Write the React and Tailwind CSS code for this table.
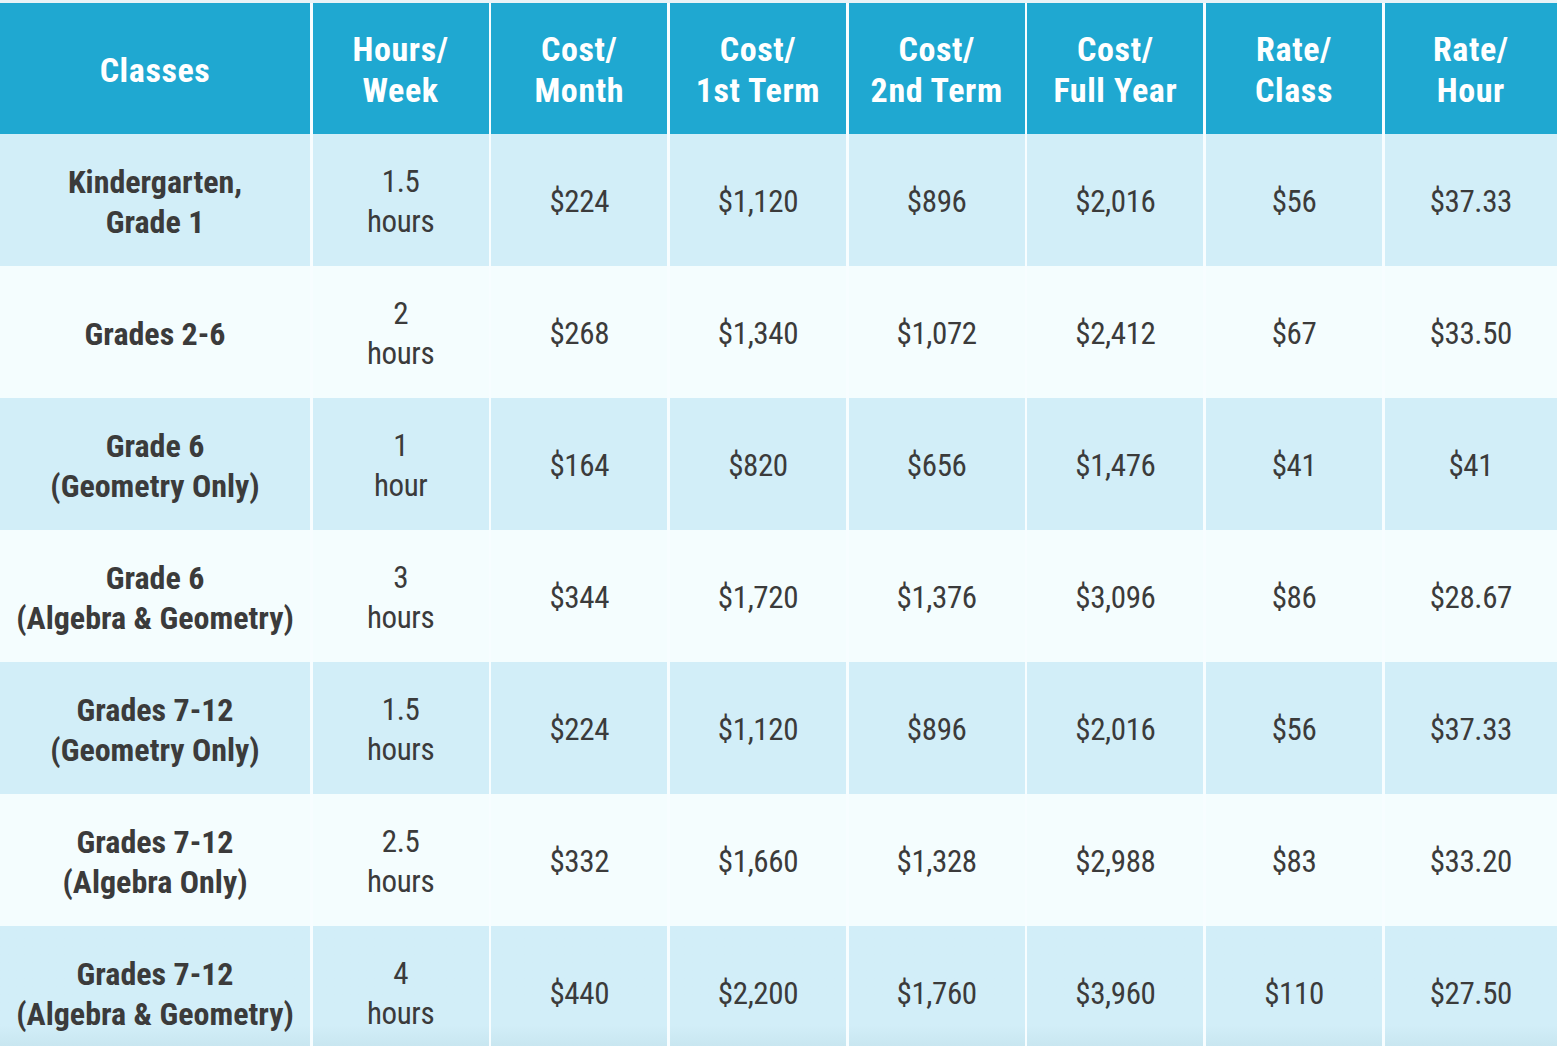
import React from 'react';

const headers = [
  ['Classes'],
  ['Hours/', 'Week'],
  ['Cost/', 'Month'],
  ['Cost/', '1st Term'],
  ['Cost/', '2nd Term'],
  ['Cost/', 'Full Year'],
  ['Rate/', 'Class'],
  ['Rate/', 'Hour'],
];

const rows = [
  [['Kindergarten,', 'Grade 1'], ['1.5', 'hours'], '$224', '$1,120', '$896', '$2,016', '$56', '$37.33'],
  [['Grades 2-6'], ['2', 'hours'], '$268', '$1,340', '$1,072', '$2,412', '$67', '$33.50'],
  [['Grade 6', '(Geometry Only)'], ['1', 'hour'], '$164', '$820', '$656', '$1,476', '$41', '$41'],
  [['Grade 6', '(Algebra & Geometry)'], ['3', 'hours'], '$344', '$1,720', '$1,376', '$3,096', '$86', '$28.67'],
  [['Grades 7-12', '(Geometry Only)'], ['1.5', 'hours'], '$224', '$1,120', '$896', '$2,016', '$56', '$37.33'],
  [['Grades 7-12', '(Algebra Only)'], ['2.5', 'hours'], '$332', '$1,660', '$1,328', '$2,988', '$83', '$33.20'],
  [['Grades 7-12', '(Algebra & Geometry)'], ['4', 'hours'], '$440', '$2,200', '$1,760', '$3,960', '$110', '$27.50'],
];

const font = "font-['Roboto_Condensed','Liberation_Sans_Narrow','DejaVu_Sans_Condensed','Liberation_Sans',sans-serif]";

const Lines = ({ lines }) => (
  <div className="flex flex-col items-center">
    {lines.map((l) => (
      <span key={l} className="whitespace-nowrap">{l}</span>
    ))}
  </div>
);

export default function App() {
  return (
    <div className={`w-[1557px] h-[1046px] overflow-hidden bg-[#e8f3f7] pt-[3px] ${font}`}>
      <div className="grid grid-cols-[310px_repeat(6,176.2px)_1fr] gap-x-[2.5px] bg-[#f7fdff]">
        {headers.map((h, i) => (
          <div
            key={i}
            className="h-[131px] bg-[#1fa8d1] flex items-center justify-center text-white font-bold text-[34px] leading-[41px] tracking-[0.6px] pt-[3px]"
          >
            <Lines lines={h} />
          </div>
        ))}
        {rows.map((r, ri) => {
          const last = ri === rows.length - 1;
          const bg = ri % 2 === 0
            ? last
              ? 'bg-gradient-to-b from-[#d2eef8] from-75% to-[#c3e2ec]'
              : 'bg-[#d2eef8]'
            : 'bg-[#f4fdfe]';
          return r.map((c, ci) => (
            <div
              key={`${ri}-${ci}`}
              className={`h-[132px] ${bg} flex items-center justify-center text-[#3b3b3b] leading-[40px] pt-[4px] ${
                ci === 0 ? 'font-bold text-[32px]' : 'font-normal text-[31px] tracking-[-0.4px]'
              }`}
            >
              {Array.isArray(c) ? <Lines lines={c} /> : <span className="whitespace-nowrap">{c}</span>}
            </div>
          ));
        })}
      </div>
    </div>
  );
}
